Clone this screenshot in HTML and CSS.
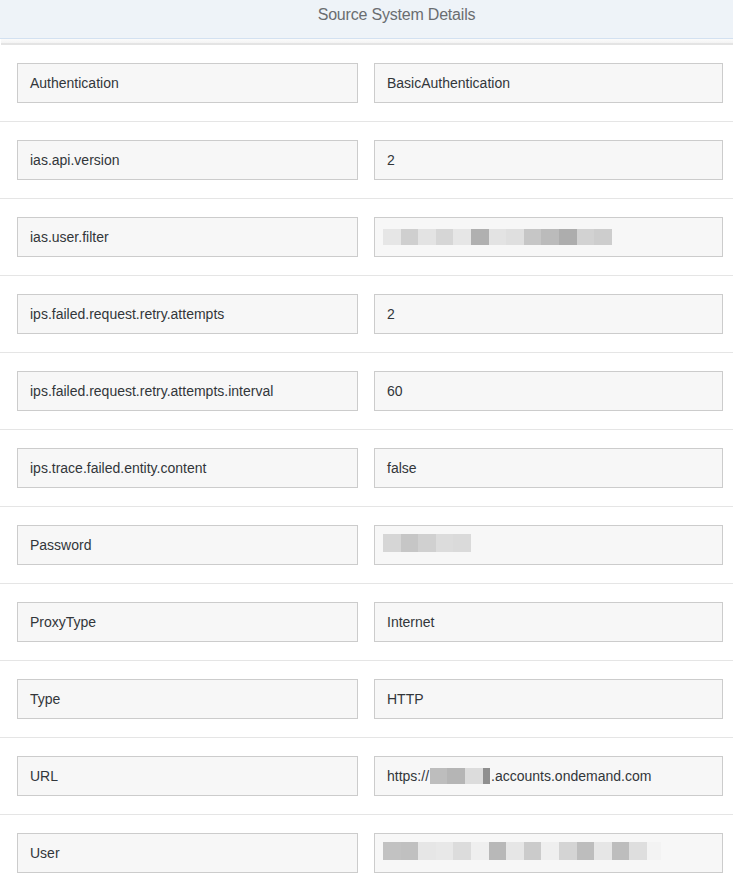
FILE: index.html
```html
<!DOCTYPE html>
<html lang="en">
<head>
<meta charset="utf-8">
<title>Source System Details</title>
<link rel="stylesheet" href="styles.css">
</head>
<body>
<header class="hdr"><h1 class="title">Source System Details</h1></header>
<div class="shadow"></div>
<main class="list">
  <div class="row"><div class="box">Authentication</div><div class="box">BasicAuthentication</div></div>
  <div class="row"><div class="box">ias.api.version</div><div class="box">2</div></div>
  <div class="row"><div class="box">ias.user.filter</div><div class="box"><span class="blur h16 lead">
    <i class="sq se6"></i><i class="sq scf"></i><i class="sq se3"></i><i class="sq sd6"></i><i class="sq se6"></i><i class="sq sb0"></i><i class="sq se3"></i><i class="sq sdf"></i><i class="sq sc6"></i><i class="sq sbb"></i><i class="sq sad"></i><i class="sq sd2"></i><i class="sq scd"></i>
  </span></div></div>
  <div class="row"><div class="box">ips.failed.request.retry.attempts</div><div class="box">2</div></div>
  <div class="row"><div class="box">ips.failed.request.retry.attempts.interval</div><div class="box">60</div></div>
  <div class="row"><div class="box">ips.trace.failed.entity.content</div><div class="box">false</div></div>
  <div class="row"><div class="box">Password</div><div class="box"><span class="blur h18 up2 lead">
    <i class="sq sd6"></i><i class="sq sc6"></i><i class="sq sd0"></i><i class="sq sdc"></i><i class="sq sda"></i>
  </span></div></div>
  <div class="row"><div class="box">ProxyType</div><div class="box">Internet</div></div>
  <div class="row"><div class="box">Type</div><div class="box">HTTP</div></div>
  <div class="row"><div class="box">URL</div><div class="box">https://<span class="blur h16 gapl"><i class="sq sbd w17"></i><i class="sq sb5 w18"></i><i class="sq sdc w18"></i><i class="sq s8f w7"></i></span>.accounts.ondemand.com</div></div>
  <div class="row"><div class="box">User</div><div class="box"><span class="blur h18 up2 lead">
    <i class="sq sc2"></i><i class="sq sc0"></i><i class="sq se6"></i><i class="sq se8"></i><i class="sq sdc"></i><i class="sq sef"></i><i class="sq sb8"></i><i class="sq se6"></i><i class="sq scb"></i><i class="sq sef"></i><i class="sq sd4"></i><i class="sq sbd"></i><i class="sq se6"></i><i class="sq sbd"></i><i class="sq sde"></i><i class="sq sf3 w14"></i>
  </span></div></div>
</main>
</body>
</html>
```
FILE: styles.css
```css
html, body {
  margin: 0;
  padding: 0;
  background: #ffffff;
  overflow: hidden;
}
body {
  font-family: "Liberation Sans", Arial, sans-serif;
  color: #32363a;
  width: 733px;
  height: 879px;
}
.hdr {
  height: 38px;
  background: #eef3f8;
  border-bottom: 1px solid #d3e1f1;
  display: flex;
  align-items: center;
  justify-content: center;
  padding-left: 60px;
}
.title {
  margin: 0;
  font-size: 16px;
  font-weight: normal;
  color: #6a6d70;
  letter-spacing: -0.2px;
  padding-bottom: 8px;
}
.shadow {
  height: 6px;
  margin-left: 1px;
  background: linear-gradient(#fbfbfb 0, #f4f4f4 65%, #e4e4e4 66%, #e4e4e4 100%);
}
.list {
  display: flex;
  flex-direction: column;
}
.row {
  display: grid;
  grid-template-columns: 341px 349px;
  column-gap: 16px;
  padding: 18px 10px 18px 17px;
  border-bottom: 1px solid #e5e5e5;
}
.box {
  height: 40px;
  box-sizing: border-box;
  border: 1px solid #cccccc;
  background: #f7f7f7;
  display: flex;
  align-items: center;
  padding: 0 12px;
  font-size: 14px;
  white-space: nowrap;
}
.blur {
  display: inline-flex;
}
.lead { margin-left: -4px; }
.h16 { height: 16px; }
.h18 { height: 18px; }
.up2 { margin-top: -4px; }
.gapl { margin-left: 1px; margin-right: 1px; }
.sq {
  display: block;
  width: 17.6px;
  height: 100%;
}
.w7 { width: 7px; }
.w14 { width: 14px; }
.w17 { width: 17px; }
.w18 { width: 18px; }
.s8f { background: #8f8f8f; }
.sad { background: #adadad; }
.sb0 { background: #b0b0b0; }
.sb5 { background: #b5b5b5; }
.sb8 { background: #b8b8b8; }
.sbb { background: #bbbbbb; }
.sbd { background: #bdbdbd; }
.sc0 { background: #c0c0c0; }
.sc2 { background: #c2c2c2; }
.sc6 { background: #c6c6c6; }
.scb { background: #cbcbcb; }
.scd { background: #cdcdcd; }
.scf { background: #cfcfcf; }
.sd0 { background: #d0d0d0; }
.sd2 { background: #d2d2d2; }
.sd4 { background: #d4d4d4; }
.sd6 { background: #d6d6d6; }
.sda { background: #dadada; }
.sdc { background: #dcdcdc; }
.sde { background: #dedede; }
.sdf { background: #dfdfdf; }
.se3 { background: #e3e3e3; }
.se6 { background: #e6e6e6; }
.se8 { background: #e8e8e8; }
.sef { background: #efefef; }
.sf3 { background: #f3f3f3; }
```
